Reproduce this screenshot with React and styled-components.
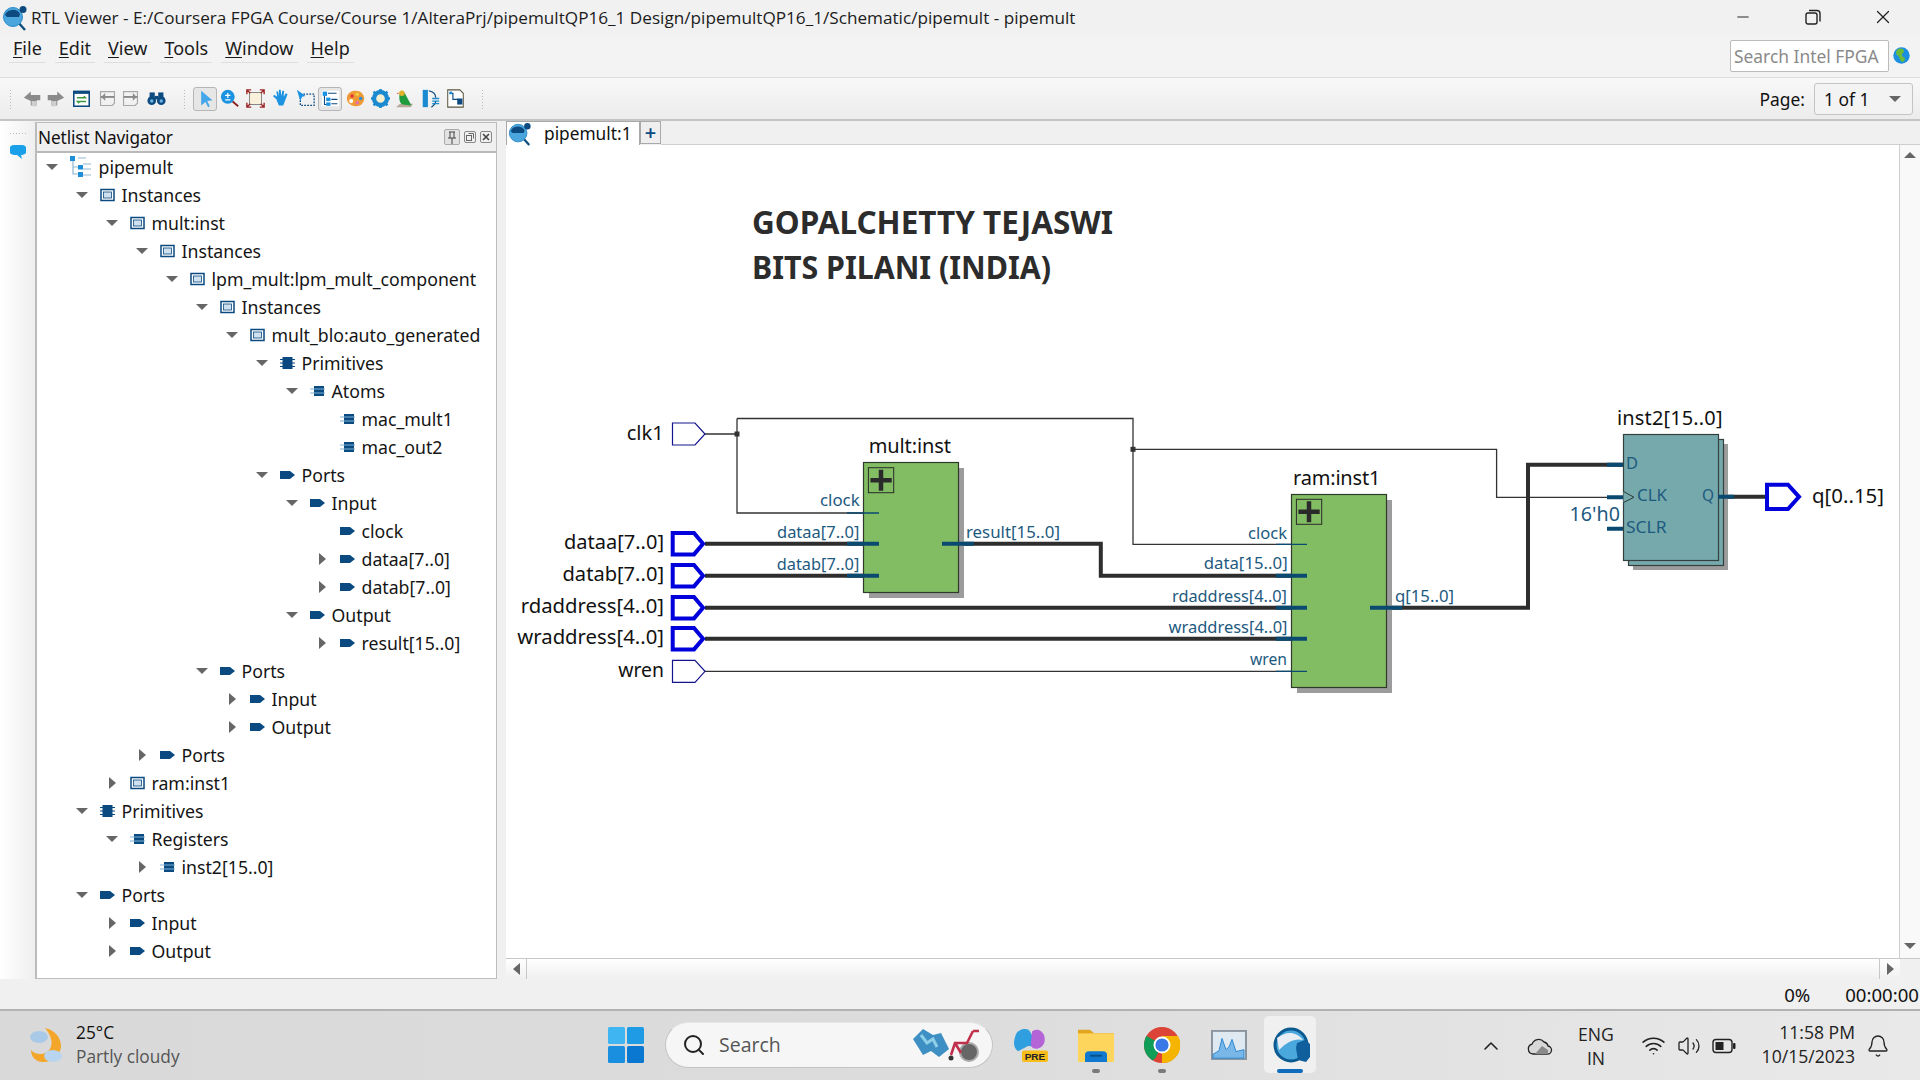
import React from "react";
import styled, { createGlobalStyle } from "styled-components";
import { Search, Wifi, ChevronUp, Bell, Volume2, Minus, X } from "lucide-react";

const Global = createGlobalStyle`
  html, body { margin: 0; padding: 0; background: #f0f0f0; }
  * { box-sizing: border-box; }
`;

const UI = `"Noto Sans", "Open Sans", sans-serif`;
const Page = styled.div`
  width: 1920px; height: 1080px; overflow: hidden; display: flex; flex-direction: column;
  font-family: ${UI}; color: #111; background: #f0f0f0;
`;
const TitleBar = styled.div`
  height: 36px; display: flex; align-items: center; padding-left: 2px; background: #f1f1f1; position: relative;
`;
const TitleText = styled.span`
  margin-left: 3px; margin-bottom: 2px; font-size: 17.16px; color: #1c1c1c; white-space: nowrap; font-family: "Open Sans", sans-serif;
`;
const WinControls = styled.div`
  margin-left: auto; display: flex; align-items: center; height: 32px; margin-top: -2px;
`;
const WinButton = styled.div`
  width: 70px; display: flex; justify-content: center; color: #222; margin-right: ${p => p.$mr || 0}px;
`;
const MenuBar = styled.div`
  height: 42px; display: flex; align-items: flex-start; padding: 0 31px 0 9px; gap: 9px; background: #f3f3f3;
  border-bottom: 1px solid #dcdcdc; position: relative;
`;
const MenuItem = styled.div`
  font-size: 18px; height: 27px; line-height: 24px; padding: 0 4px; border-bottom: 1px solid #dedede; color: #1a1a1a;
  & > u { text-underline-offset: 2px; }
`;
const SearchBox = styled.div`
  margin-left: auto; margin-top: 4px; width: 159px; height: 32px; background: #fff; border: 1px solid #bbb; border-radius: 2px;
  font-size: 17.4px; color: #8a8a8a; line-height: 31px; padding-left: 3px; white-space: nowrap; overflow: hidden;
`;
const Globe = styled.svg`
  position: absolute; right: 10px; top: 11px;
`;
const ToolBar = styled.div`
  height: 43px; display: flex; align-items: center; background: linear-gradient(#f8f8f8, #ececec);
  border-bottom: 2px solid #c4c4c4; padding-left: 9px; padding-right: 7px;
`;
const Handle = styled.div`
  width: 3px; height: 20px; margin: 0 ${p => p.$mr || 0}px 0 ${p => p.$ml || 0}px;
  background-image: radial-gradient(#bbb 1px, transparent 1px); background-size: 3px 3px;
`;
const ToolSlot = styled.div`
  width: ${p => p.$w}px; height: 24px; display: flex; align-items: center; justify-content: center; flex: none;
`;
const ActiveSlot = styled(ToolSlot)`
  background: #e6e6e6; border: 1px solid #b6b6b6; border-radius: 3px;
`;
const PageLabel = styled.span`
  margin-left: auto; font-size: 17.4px; margin-right: 9px;
`;
const PageSelect = styled.div`
  width: 99px; height: 32px; background: #f3f3f3; border: 1px solid #c4c4c4; border-radius: 3px; display: flex;
  align-items: center; justify-content: space-between; padding: 0 11px 0 9px; font-size: 17.4px;
`;
const Caret = styled.span`
  width: 0; height: 0; display: inline-block; flex: none;
  border-left: ${p => (p.$dir === "right" ? 7 : p.$dir === "left" ? 0 : 6)}px solid ${p => (p.$dir === "right" ? "#666" : "transparent")};
  border-right: ${p => (p.$dir === "left" ? 7 : p.$dir === "right" ? 0 : 6)}px solid ${p => (p.$dir === "left" ? "#666" : "transparent")};
  border-top: ${p => (p.$dir === "down" ? "6px solid #666" : p.$dir === "up" ? "0 solid transparent" : "6px solid transparent")};
  border-bottom: ${p => (p.$dir === "up" ? "6px solid #666" : p.$dir === "down" ? "0 solid transparent" : "6px solid transparent")};
`;
const Main = styled.div`
  flex: 1; min-height: 0; display: flex;
`;
const LeftDock = styled.div`
  width: 35px; flex: none; display: flex; flex-direction: column; align-items: center; padding-top: 11px; gap: 10px;
  background: linear-gradient(90deg, #fff, #efefef);
`;
const DockDots = styled.div`
  width: 17px; height: 3px; background-image: radial-gradient(#bbb 1px, transparent 1px); background-size: 3px 3px;
`;
const Panel = styled.div`
  width: 462px; flex: none; margin-top: 1px; display: flex; flex-direction: column; background: #fff;
  border: 1px solid #bcbcbc; border-left-width: 2px;
`;
const PanelHeader = styled.div`
  height: 30px; flex: none; display: flex; align-items: center; background: #f0f0f0; border-bottom: 2px solid #b9b9b9;
  padding: 0 4px 0 1px; font-size: 17.2px;
`;
const PanelTitle = styled.span`
  margin-right: auto; letter-spacing: -0.1px;
`;
const PanelBtn = styled.div`
  width: ${p => (p.$active ? 16 : 12)}px; height: ${p => (p.$active ? 16 : 12)}px; margin-left: ${p => p.$ml || 4}px;
  display: flex; align-items: center; justify-content: center; border-radius: 2px;
  ${p => (p.$active ? "background:#e2e2e2; border:1px solid #aaa;" : "border:1px solid #888;")}
  color: #555;
`;
const Tree = styled.div`
  flex: 1; padding-top: 0;
`;
const Row = styled.div`
  height: 28px; display: flex; align-items: center; padding-left: ${p => 9 + p.$level * 30}px; font-size: 17.7px; color: #151515; white-space: nowrap;
`;
const ArrowBox = styled.div`
  width: 12px; flex: none; display: flex; justify-content: center; margin-right: 11.5px;
`;
const RowIcon = styled.svg`
  flex: none; margin-right: ${p => p.$mr || 7}px;
`;
const Workspace = styled.div`
  flex: 1; min-width: 0; margin-left: 9px; display: flex; flex-direction: column;
`;
const TabStrip = styled.div`
  height: 24px; flex: none; display: flex; align-items: stretch; position: relative;
`;
const Tab = styled.div`
  width: 134px; background: #fff; border: 1px solid #a9a9a9; border-bottom: none; display: flex; align-items: center; padding-left: 1px;
  font-size: 17.3px; z-index: 1; height: 24px;
`;
const TabLabel = styled.span`
  margin-left: 12px;
`;
const AddTab = styled.div`
  width: 21px; height: 23px; background: #efefef; border: 1px solid #a9a9a9; color: #0a4a80; display: flex; align-items: center; justify-content: center; font-size: 20px; font-weight: 600;
`;
const TabFill = styled.div`
  flex: 1; border-bottom: 1px solid #cfcfcf;
`;
const CanvasRow = styled.div`
  flex: 1; min-height: 0; display: flex; background: #fff;
`;
const Schematic = styled.svg`
  flex: none; display: block; background: #fff;
`;
const VScroll = styled.div`
  flex: 1; border-left: 1px solid #cfcfcf; display: flex; flex-direction: column; align-items: center; justify-content: space-between;
  padding: 7px 0 9px; background: #f9f9f9;
`;
const HScroll = styled.div`
  height: 21px; flex: none; display: flex; align-items: center; border-top: 1px solid #c8c8c8;
  background: linear-gradient(#fff, #f0f0f0);
`;
const HButton = styled.div`
  width: 21px; height: 100%; display: flex; align-items: center; justify-content: center;
  border-${p => p.$side}: 1px solid #c8c8c8;
`;
const HTrack = styled.div` flex: 1; `;
const HCorner = styled.div` width: 20px; height: 100%; background: #f0f0f0; `;
const StatusBar = styled.div`
  height: 30px; flex: none; display: flex; align-items: center; justify-content: flex-end; padding-right: 1px; font-size: 18.6px; background: #f0f0f0;
`;
const StatusCell = styled.span`
  margin-left: ${p => p.$ml}px;
`;
const Taskbar = styled.div`
  height: 71px; flex: none; display: flex; align-items: center; border-top: 2px solid #b2b2b2; padding-bottom: 2px;
  background: linear-gradient(90deg, #d9d9d9, #dcdcdc 50%, #e9e9e9); font-family: "Open Sans", sans-serif; position: relative;
`;
const Weather = styled.div`
  display: flex; align-items: center; margin-left: 29px; width: 579px; flex: none;
`;
const WeatherText = styled.div`
  margin-left: 11px; margin-bottom: 1px; display: flex; flex-direction: column; gap: 1px; font-size: 17.3px; line-height: 23px;
`;
const Muted = styled.span` color: #555; `;
const SearchPill = styled.div`
  margin-left: 21px; margin-right: ${p => p.$mr}px; width: 328px; height: 46px; border-radius: 23px; background: #f6f6f6; border: 1px solid #c4c4c4; border-top-color: #e6e6e6;
  display: flex; align-items: center; padding-left: 16px; color: #444; font-size: 19.5px; flex: none; position: relative;
`;
const PillText = styled.span` margin-left: 13px; color: #555; margin-right: auto; `;
const PillArt = styled.svg` margin-right: 9px; `;
const AppSlot = styled.div`
  width: ${p => p.$w || 66}px; height: 57px; flex: none; display: flex; align-items: center; justify-content: center; position: relative; border-radius: 5px;
  ${p => (p.$active ? "background:#f0f0f0; margin-left: 3px; padding-left: 4px;" : "")}
`;
const AppDot = styled.div`
  position: absolute; bottom: 0; left: 50%; transform: translateX(-50%); height: 4px; border-radius: 2px;
  width: ${p => (p.$active ? 26 : 8)}px; background: ${p => (p.$active ? "#0f6cbd" : "#7a7a7a")};
`;
const Tray = styled.div`
  position: absolute; right: 0; top: 0; bottom: 0; display: flex; align-items: center; color: #222; font-size: 17.6px;
`;
const TrayStack = styled.div`
  display: flex; flex-direction: column; align-items: ${p => p.$align || "center"}; line-height: 24px; width: ${p => p.$w}px; margin-left: ${p => p.$ml || 0}px;
  margin-bottom: ${p => p.$mb || 0}px;
`;
const TrayIcon = styled.div`
  display: flex; margin-left: ${p => p.$ml || 0}px;
`;

const SchText = styled.text`
  font-family: ${UI}; font-size: ${p => p.$size || 20}px; fill: ${p => p.$color || "#111"}; font-weight: ${p => p.$weight || 400};
  dominant-baseline: central;
`;

const AppLogo = ({ s = 26 }) => (
  <svg width={s} height={s} viewBox="0 0 26 26">
    <line x1="15" y1="16" x2="23" y2="25" stroke="#0c4f7c" strokeWidth="2.4" />
    <circle cx="11" cy="12" r="9.5" fill="#4aa6dd" stroke="#2a8ac8" strokeWidth="1" />
    <path d="M3 10 a8 7 0 0 1 15 -1 l-1 3 h-12z" fill="#0c4a80" />
    <circle cx="21" cy="4.5" r="3.5" fill="#0c4a80" />
  </svg>
);
const Port = () => (
  <RowIcon width="15" height="14" viewBox="0 0 15 14"><path d="M0 3h10l5 4-5 4H0z" fill="#0a4a80" /></RowIcon>
);
const Inst = () => (
  <RowIcon width="15" height="14" viewBox="0 0 15 14"><rect x="1" y="1.5" width="13" height="11" fill="#fff" stroke="#0a4a80" strokeWidth="1.5" /><rect x="3.5" y="4" width="8" height="6" fill="#cfe0ee" stroke="#0a4a80" strokeWidth=".8" /></RowIcon>
);
const Prim = () => (
  <RowIcon width="15" height="14" viewBox="0 0 15 14"><rect x="2.5" y="1" width="10" height="12" fill="#0a4a80" /><path d="M0 3.5h15M0 7h15M0 10.5h15" stroke="#0a4a80" strokeWidth="1.2" /></RowIcon>
);
const Atom = () => (
  <RowIcon width="15" height="14" viewBox="0 0 15 14"><rect x="4" y="2" width="10" height="10" fill="#0a4a80" /><path d="M0 5h15M0 9h15" stroke="#7fb2d6" strokeWidth="1.2" /></RowIcon>
);
const TreeIco = () => (
  <RowIcon $mr={7} width="22" height="22" viewBox="0 0 22 22">
    <path d="M3 4v14h6M3 11h6M8 2h8M13 8h8M13 13h8M13 19h8" stroke="#8fb7d1" strokeWidth="1.2" fill="none" />
    <rect x="0" y="0" width="5" height="5" fill="#1e8fd6" /><rect x="8" y="9" width="5" height="4.5" fill="#1e8fd6" /><rect x="8" y="16" width="5" height="5" fill="#1e8fd6" />
  </RowIcon>
);
const ICONS = { inst: Inst, prim: Prim, atom: Atom, port: Port, tree: TreeIco };

const ROWS = [
  [0, "down", "tree", "pipemult"], [1, "down", "inst", "Instances"], [2, "down", "inst", "mult:inst"], [3, "down", "inst", "Instances"],
  [4, "down", "inst", "lpm_mult:lpm_mult_component"], [5, "down", "inst", "Instances"], [6, "down", "inst", "mult_blo:auto_generated"],
  [7, "down", "prim", "Primitives"], [8, "down", "atom", "Atoms"], [9, "", "atom", "mac_mult1"], [9, "", "atom", "mac_out2"],
  [7, "down", "port", "Ports"], [8, "down", "port", "Input"], [9, "", "port", "clock"], [9, "right", "port", "dataa[7..0]"], [9, "right", "port", "datab[7..0]"],
  [8, "down", "port", "Output"], [9, "right", "port", "result[15..0]"], [5, "down", "port", "Ports"], [6, "right", "port", "Input"], [6, "right", "port", "Output"],
  [3, "right", "port", "Ports"], [2, "right", "inst", "ram:inst1"], [1, "down", "prim", "Primitives"], [2, "down", "atom", "Registers"], [3, "right", "atom", "inst2[15..0]"],
  [1, "down", "port", "Ports"], [2, "right", "port", "Input"], [2, "right", "port", "Output"],
];

const Ico = ({ children, s = 19 }) => <svg width={s} height={s} viewBox="0 0 22 22">{children}</svg>;

const TOOLS = [
  [24, <Ico key="a"><path d="M1 10l8-7v4h11v6H16v6H9v-5z" fill="#8a8a8a" /><rect x="10" y="14" width="6" height="6" fill="#cfcfcf" /></Ico>],
  [22, <Ico key="b"><path d="M21 10l-8-7v4H2v6h4v6h7v-5z" fill="#8a8a8a" /><rect x="6" y="14" width="6" height="6" fill="#cfcfcf" /></Ico>],
  [30, <Ico key="c" s={17}><rect x="1" y="2" width="20" height="19" fill="#fff" stroke="#0c4a80" strokeWidth="2" /><rect x="0" y="1" width="22" height="4" fill="#0c4a80" /><path d="M5 10h11l-2-2M17 15H6l2 2" stroke="#3f9a3f" strokeWidth="2" fill="none" /></Ico>],
  [22, <Ico key="d" s={17}><path d="M2 2h18v15l-3 3H2z" fill="none" stroke="#a8a8a8" strokeWidth="1.5" /><path d="M2 9h18" stroke="#8a8a8a" strokeWidth="2.4" /><path d="M8 4l-5 5 5 5z" fill="#8a8a8a" /></Ico>],
  [24, <Ico key="e" s={17}><path d="M2 2h18v15l-3 3H2z" fill="none" stroke="#a8a8a8" strokeWidth="1.5" /><path d="M2 9h18" stroke="#8a8a8a" strokeWidth="2.4" /><path d="M14 4l5 5-5 5z" fill="#8a8a8a" /></Ico>],
  [28, <Ico key="f"><circle cx="5.5" cy="13.5" r="5" fill="#0c4a80" /><circle cx="16.5" cy="13.5" r="5" fill="#0c4a80" /><rect x="3" y="4" width="6" height="8" fill="#0c4a80" /><rect x="13" y="4" width="6" height="8" fill="#0c4a80" /><rect x="9" y="8" width="4" height="4" fill="#0c4a80" /><circle cx="5.5" cy="14" r="2" fill="#6db4e4" /><circle cx="16.5" cy="14" r="2" fill="#6db4e4" /></Ico>],
];
const TOOLS2 = [
  [24, <Ico key="a"><path d="M6 2l13 11-6 1 3 6-2 1-3-6-5 4z" fill="#45a6ea" /></Ico>, true],
  [24, <Ico key="b"><line x1="13" y1="13" x2="21" y2="20" stroke="#8c1c1c" strokeWidth="2" /><circle cx="9" cy="9" r="8" fill="#1b93e0" /><path d="M9 4.5v6M6 7.5h6M6 12.5h6" stroke="#fff" strokeWidth="1.4" /></Ico>],
  [29, <Ico key="c"><rect x="4" y="4" width="14" height="14" fill="#faf1dc" stroke="#777" /><path d="M1 6V1h5M16 1h5v5M21 16v5h-5M6 21H1v-5M1 1l4 4M21 1l-4 4M21 21l-4-4M1 21l4-4" stroke="#9b2323" strokeWidth="1.6" fill="none" /></Ico>],
  [22, <Ico key="d"><path d="M5 12L1 8l2-1 3 2-1-6h2l1 5V1h2l1 7 1-6h2l-.5 7 2.5-4 2 1-3 8-2 5H8z" fill="#1b93e0" /></Ico>],
  [26, <Ico key="e"><rect x="5" y="6" width="16" height="13" fill="none" stroke="#0c4a80" strokeWidth="1.5" strokeDasharray="2 1.5" /><path d="M1 1l10 7-4 1-2 5z" fill="#1b93e0" /></Ico>],
  [24, <Ico key="f"><rect x="1" y="2" width="20" height="18" fill="#fff" /><rect x="2" y="3" width="5" height="5" fill="#1b93e0" /><rect x="6" y="10" width="5" height="4" fill="#1b93e0" /><rect x="6" y="15.5" width="5" height="4" fill="#1b93e0" /><path d="M8 5h10M12 12h7M12 17h7M4 8v10h2" stroke="#0c4a80" strokeWidth="1.2" fill="none" /></Ico>, true],
  [26, <Ico key="g"><path d="M11 2c6 0 10 4 10 9s-4 9-9 9-11-3-11-9 5-9 10-9z" fill="#f19a35" /><circle cx="7" cy="8" r="2" fill="#d33" /><circle cx="13" cy="6" r="2" fill="#ecd23a" /><circle cx="17" cy="11" r="2" fill="#2a8ed8" /><circle cx="13" cy="16" r="2" fill="#e070b0" /><circle cx="6" cy="14" r="2.4" fill="#fff" /></Ico>],
  [24, <Ico key="h"><circle cx="11" cy="11" r="7.5" fill="#f6efd0" stroke="#1b8ad0" strokeWidth="5" /><path d="M11 0v3M11 19v3M0 11h3M19 11h3M3 3l2 2M17 17l2 2M3 19l2-2M17 5l2-2" stroke="#1b8ad0" strokeWidth="3" /></Ico>],
  [24, <Ico key="i"><path d="M1 21l5-4h15l-3 4z" fill="#b7a89a" /><path d="M5 8c0-5 6-6 7-2l7 13-10-1C5 16 5 12 5 8z" fill="#1f9b3e" /><circle cx="8" cy="5" r="3.2" fill="#e2b22a" /><path d="M4 4L2 5l2 1" fill="#d33" /></Ico>],
  [28, <Ico key="j"><path d="M2 1h6v20H2z" fill="#1b8ad0" /><path d="M9 2c5 1 8 4 8 8M12 21c3-2 5-4 5-7" stroke="#0c4a80" strokeWidth="1.4" fill="none" /><path d="M13 11h8M13 14h8M13 17h8" stroke="#1b8ad0" strokeWidth="1.6" /></Ico>],
  [22, <Ico key="k"><path d="M2 1h14l4 4v16H2z" fill="#fff" stroke="#5b5540" strokeWidth="1.2" /><path d="M4 5h4v7h6" stroke="#0c4a80" fill="none" strokeWidth="1.3" /><rect x="4" y="3" width="3" height="3" fill="#1b8ad0" /><rect x="13" y="11" width="6" height="7" fill="#0c4a80" /></Ico>],
];

const Pin = ({ cy, bus }) => (bus
  ? <path d={`M672.7 ${cy - 10.7}H694l9 10.7-9 10.7H672.7z`} fill="#fff" stroke="#0000dc" strokeWidth="4" />
  : <path d={`M672.5 ${cy - 11}H695l10 11-10 11H672.5z`} fill="#fff" stroke="#14148c" strokeWidth="1.2" />);
const PINS = [[434, false, "clk1", 626.7, 37], [543.7, true, "dataa[7..0]", 564, 100], [575.7, true, "datab[7..0]", 562.5, 101.5], [607.7, true, "rdaddress[4..0]", 520.7, 143.3], [638.7, true, "wraddress[4..0]", 517.3, 146.7], [671.3, false, "wren", 618.3, 45.7]];

const WIRE_THIN = "M705 434H737M737 418.5V513H879M737 418.5H1133V544.3H1307M1133 449.3H1496.6V497.3H1623M705 671.3H1307";
const WIRE_THICK = "M705 543.7H879M705 575.7H879M942 543.7H1100.8V575.7H1307M705 607.7H1307M705 638.7H1307M1370 607.7H1528V464.7H1623M1718 496.7H1765";
const STUB_THICK = "M847 543.7H879M847 575.7H879M942 543.7H973.7M1276 575.7H1307M1276 607.7H1307M1276 638.7H1307M1370 607.7H1402M1607 464.7H1623M1607 528.7H1623M1607 497.3H1623M1718 496.7H1734";
const STUB_THIN = "M847 513H879M1276 544.3H1307M1276 671.3H1307";
const TEAL = "#1d5a80";
const LABELS = [
  ["clock", 820, 500.3, 39.7], ["dataa[7..0]", 777, 531.7, 82.3], ["datab[7..0]", 776.7, 564, 82.6], ["result[15..0]", 966, 531.7, 94],
  ["clock", 1248, 532.7, 39], ["data[15..0]", 1203.7, 563, 84], ["rdaddress[4..0]", 1172, 595.7, 115], ["wraddress[4..0]", 1168.5, 627.3, 119], ["wren", 1250, 658.7, 37],
  ["q[15..0]", 1395, 595.7, 59], ["D", 1626, 463, 12], ["CLK", 1637, 495, 30], ["Q", 1702, 495, 12], ["SCLR", 1626, 527, 40.5],
];

const PlusBox = ({ x, y }) => (
  <g>
    <rect x={x} y={y} width="25.3" height="25" fill="none" stroke="#2a2a2a" strokeWidth="1" />
    <path d={`M${x + 2} ${y + 12.5}H${x + 23.3}M${x + 12.6} ${y + 2}V${y + 23}`} stroke="#2a2a2a" strokeWidth="4.5" />
  </g>
);

export default function App() {
  return (
    <Page>
      <Global />
      <TitleBar>
        <AppLogo />
        <TitleText>RTL Viewer - E:/Coursera FPGA Course/Course 1/AlteraPrj/pipemultQP16_1 Design/pipemultQP16_1/Schematic/pipemult - pipemult</TitleText>
        <WinControls>
          <WinButton><Minus size={18} strokeWidth={1.3} /></WinButton>
          <WinButton>
            <svg width="16" height="16" viewBox="0 0 16 16"><rect x="1" y="4" width="11" height="11" rx="2" fill="none" stroke="#222" strokeWidth="1.4" /><path d="M4 1.5h8a3 3 0 0 1 3 3v8" fill="none" stroke="#222" strokeWidth="1.4" /></svg>
          </WinButton>
          <WinButton $mr={2}><X size={22} strokeWidth={1.3} /></WinButton>
        </WinControls>
      </TitleBar>
      <MenuBar>
        {["File", "Edit", "View", "Tools", "Window", "Help"].map(m => (
          <MenuItem key={m}><u>{m[0]}</u>{m.slice(1)}</MenuItem>
        ))}
        <SearchBox>Search Intel FPGA</SearchBox>
        <Globe width="17" height="17" viewBox="0 0 17 17">
          <circle cx="8.5" cy="8.5" r="8.2" fill="#1b8fe0" />
          <path d="M5 2c3-1 6 0 6 2s-2 2-2 4 3 2 3 4-2 3-3 3-2-3-3-5-3-2-3-4 1-3 2-4z" fill="#6cba3c" />
        </Globe>
      </MenuBar>
      <ToolBar>
        <Handle $mr={8} />
        {TOOLS.map(([w, icon], i) => <ToolSlot key={i} $w={w}>{icon}</ToolSlot>)}
        <Handle $ml={13} $mr={7} />
        {TOOLS2.map(([w, icon, act], i) => act
          ? <ActiveSlot key={i} $w={w}>{icon}</ActiveSlot>
          : <ToolSlot key={i} $w={w}>{icon}</ToolSlot>)}
        <Handle $ml={15} />
        <PageLabel>Page:</PageLabel>
        <PageSelect>1 of 1<Caret $dir="down" /></PageSelect>
      </ToolBar>
      <Main>
        <LeftDock>
          <DockDots />
          <svg width="16" height="15" viewBox="0 0 16 15"><path d="M4 0h8a4 4 0 0 1 0 10h-1l1 4-5-4H4A4 4 0 0 1 4 0z" fill="#19a0e8" /></svg>
        </LeftDock>
        <Panel>
          <PanelHeader>
            <PanelTitle>Netlist Navigator</PanelTitle>
            <PanelBtn $active>
              <svg width="10" height="13" viewBox="0 0 10 13"><path d="M2 1h6M3 1v6M7 1v6M1 7h8M5 7v6" stroke="#444" fill="none" /></svg>
            </PanelBtn>
            <PanelBtn>
              <svg width="8" height="8" viewBox="0 0 8 8"><rect x="0.5" y="2.5" width="5" height="5" fill="none" stroke="#666" /><path d="M2.5 .5h5v5" fill="none" stroke="#666" /></svg>
            </PanelBtn>
            <PanelBtn>
              <svg width="8" height="8" viewBox="0 0 8 8"><path d="M1 1l6 6M7 1l-6 6" stroke="#444" strokeWidth="1.6" /></svg>
            </PanelBtn>
          </PanelHeader>
          <Tree>
            {ROWS.map(([lvl, arrow, icon, text], i) => {
              const I = ICONS[icon];
              return (
                <Row key={i} $level={lvl}>
                  <ArrowBox>{arrow && <Caret $dir={arrow} />}</ArrowBox>
                  <I />
                  {text}
                </Row>
              );
            })}
          </Tree>
        </Panel>
        <Workspace>
          <TabStrip>
            <Tab><AppLogo s={24} /><TabLabel>pipemult:1</TabLabel></Tab>
            <AddTab>+</AddTab>
            <TabFill />
          </TabStrip>
          <CanvasRow>
            <Schematic width="1393" height="813" viewBox="506 145 1393 813">
              <SchText x="752" y="221" $size={32} $weight={700} $color="#2c2c2c" textLength="361" lengthAdjust="spacingAndGlyphs">GOPALCHETTY TEJASWI</SchText>
              <SchText x="752" y="266" $size={32} $weight={700} $color="#2c2c2c" textLength="299" lengthAdjust="spacingAndGlyphs">BITS PILANI (INDIA)</SchText>

              <path d={WIRE_THIN} fill="none" stroke="#333" strokeWidth="1.3" />
              <path d={WIRE_THICK} fill="none" stroke="#2e2e2e" strokeWidth="4" />
              <rect x="734.5" y="431.5" width="5" height="5" fill="#333" />
              <rect x="1130.5" y="446.8" width="5" height="5" fill="#333" />

              {PINS.map(([cy, bus, t, x, len]) => (
                <g key={t}>
                  <Pin cy={cy} bus={bus} />
                  <SchText x={x} y={cy - 2} textLength={len} lengthAdjust="spacingAndGlyphs">{t}</SchText>
                </g>
              ))}

              <rect x="869" y="468" width="95" height="130" fill="#9c9c9c" />
              <rect x="863.5" y="462.5" width="95" height="130" fill="#83bd63" stroke="#2f3a2a" strokeWidth="1.2" />
              <PlusBox x={868.4} y={467.7} />
              <SchText x="868.7" y="445" textLength="82.3">mult:inst</SchText>

              <rect x="1297" y="500" width="95" height="193" fill="#9c9c9c" />
              <rect x="1291.5" y="494.5" width="95" height="193" fill="#83bd63" stroke="#2f3a2a" strokeWidth="1.2" />
              <PlusBox x={1296.4} y={499.3} />
              <SchText x="1293" y="477" textLength="87.4">ram:inst1</SchText>

              <rect x="1633" y="444" width="95" height="126" fill="#9c9c9c" />
              <rect x="1628.5" y="439.5" width="95" height="126" fill="#76a9ab" stroke="#33403f" strokeWidth="1.2" />
              <rect x="1623.5" y="434.5" width="95" height="126" fill="#76a9ab" stroke="#33403f" strokeWidth="1.2" />
              <SchText x="1617" y="417" textLength="105.5">inst2[15..0]</SchText>

              <path d={STUB_THIN} fill="none" stroke="#0a4a70" strokeWidth="1.3" />
              <path d={STUB_THICK} fill="none" stroke="#0a4a70" strokeWidth="4" />
              <path d="M1623.5 491.5L1634 497.3 1623.5 502.5" fill="#76a9ab" stroke="#2a3a3a" strokeWidth="1" />

              {LABELS.map(([t, x, y, len], i) => (
                <SchText key={i} x={x} y={y} $size={16} $color={TEAL} textLength={len} lengthAdjust="spacingAndGlyphs">{t}</SchText>
              ))}
              <SchText x="1569.6" y="513" $size={19.5} $color={TEAL} textLength="50.4" lengthAdjust="spacingAndGlyphs">16'h0</SchText>
              <path d="M1767 484.7H1788L1799 496.8 1788 509H1767z" fill="#fff" stroke="#0000dc" strokeWidth="4" />
              <SchText x="1812" y="495" textLength="72" lengthAdjust="spacingAndGlyphs">q[0..15]</SchText>
            </Schematic>
            <VScroll><Caret $dir="up" /><Caret $dir="down" /></VScroll>
          </CanvasRow>
          <HScroll>
            <HButton $side="right"><Caret $dir="left" /></HButton>
            <HTrack />
            <HButton $side="left"><Caret $dir="right" /></HButton>
            <HCorner />
          </HScroll>
        </Workspace>
      </Main>
      <StatusBar>
        <StatusCell $ml={0}>0%</StatusCell>
        <StatusCell $ml={35}>00:00:00</StatusCell>
      </StatusBar>
      <Taskbar>
        <Weather>
          <svg width="36" height="38" viewBox="0 0 36 38">
            <path d="M16 2c10 2 16 10 16 18S24 36 14 36C6 36 2 30 2 24c4 5 14 6 19-1 4-7 0-15-5-21z" fill="#f4a62a" />
            <ellipse cx="10" cy="11" rx="9" ry="6" fill="#a9c9e8" />
            <ellipse cx="24" cy="30" rx="9" ry="6" fill="#b9d4ee" />
          </svg>
          <WeatherText>
            <span>25°C</span>
            <Muted>Partly cloudy</Muted>
          </WeatherText>
        </Weather>
        <svg width="36" height="36" viewBox="0 0 36 36">
          <rect x="0" y="0" width="17" height="17" rx="1.5" fill="#3fb6f2" /><rect x="19" y="0" width="17" height="17" rx="1.5" fill="#1f9be6" />
          <rect x="0" y="19" width="17" height="17" rx="1.5" fill="#1a8fe0" /><rect x="19" y="19" width="17" height="17" rx="1.5" fill="#0a78d0" />
        </svg>
        <SearchPill $mr={2.5}>
          <Search size={24} strokeWidth={2} color="#222" />
          <PillText>Search</PillText>
          <PillArt width="72" height="36" viewBox="0 0 72 36">
            <path d="M2 12L12 2l10 6 8-2 8 16-10 8-8-6-8 4z" fill="#3d8fc4" />
            <path d="M10 8l6 8 6-4 4 8" stroke="#8fd0e8" strokeWidth="3" fill="none" />
            <circle cx="58" cy="25" r="9" fill="#666" stroke="#aaa" strokeWidth="2" />
            <path d="M62 4h6M62 4l-6 12h-12l-4 12M44 16l6 10" stroke="#c0304a" strokeWidth="2.6" fill="none" />
            <circle cx="40" cy="31" r="2.5" fill="#333" />
          </PillArt>
        </SearchPill>
        <AppSlot $w={69}>
          <svg width="36" height="36" viewBox="0 0 36 40" preserveAspectRatio="none">
            <path d="M4 8c2-6 12-8 14-3l8 17-10-1-10 6C0 22 2 14 4 8z" fill="#2f9fe0" />
            <path d="M20 5c4-4 10-2 12 4 2 7 0 13-6 15-5 1-8-2-7-7z" fill="#b564d8" />
            <rect x="10" y="26" width="26" height="13" rx="2" fill="#f7bd1c" />
            <text x="23" y="36.5" fontFamily="Liberation Sans, sans-serif" fontSize="10" fontWeight="700" textAnchor="middle" fill="#222">PRE</text>
          </svg>
        </AppSlot>
        <AppSlot $w={62}>
          <svg width="36" height="34" viewBox="0 0 36 38" preserveAspectRatio="none"><path d="M0 2h12l4 4h20v32H0z" fill="#e1a520" /><rect x="0" y="6" width="36" height="32" fill="#fdd45c" /><path d="M7 38v-8a4 4 0 0 1 4-4h14a4 4 0 0 1 4 4v8z" fill="#0f78cf" /><rect x="12" y="30" width="12" height="2" fill="#0b4f8a" /></svg>
          <AppDot />
        </AppSlot>
        <AppSlot $w={70}>
          <svg width="36" height="36" viewBox="-18 -18 36 36">
            <circle r="18" fill="#db4437" />
            <path d="M0 0L-15.6-9A18 18 0 0 0 -9 15.6z" fill="#0f9d58" />
            <path d="M0 18A18 18 0 0 0 16-9L0-9z" fill="#f4b400" />
            <path d="M-15.6 9L-15.6-9 0 0-7 14z" fill="#0f9d58" />
            <circle r="8.5" fill="#fff" /><circle r="6.6" fill="#3b78e7" />
          </svg>
          <AppDot />
        </AppSlot>
        <AppSlot $w={64}>
          <svg width="36" height="30" viewBox="0 0 36 32" preserveAspectRatio="none"><rect x="1" y="1" width="34" height="30" fill="#dfe9f1" stroke="#8a95a0" strokeWidth="2" /><path d="M2 26L8 22l3-13 4 12 3-3 3-8 4 13 8-2v9H2z" fill="#79b7e8" stroke="#2a86d0" /></svg>
        </AppSlot>
        <AppSlot $active $w={52}>
          <svg width="38" height="38" viewBox="0 0 38 38">
            <circle cx="18" cy="19" r="16" fill="#4aa8dc" stroke="#0c5a90" strokeWidth="3" />
            <path d="M4 12c8-6 18-8 26 2-8-2-16 2-24 10z" fill="#e8eef3" />
            <path d="M24 17l8-3 5 4v13l-4 5-8-2-2-12z" fill="#0f5f9c" />
          </svg>
          <AppDot $active />
        </AppSlot>
        <Tray>
          <ChevronUp size={24} strokeWidth={1.6} />
          <TrayIcon $ml={24}>
            <svg width="26" height="18" viewBox="0 0 26 18"><path d="M6 17a5 5 0 0 1-1-9.8A7 7 0 0 1 17 5a5 5 0 0 1 4 4 4 4 0 0 1-1 8z" fill="#d8d8d8" stroke="#222" strokeWidth="1.3" /><path d="M8 17l7-8 6 4v4z" fill="#8a8a8a" /></svg>
          </TrayIcon>
          <TrayStack $w={60} $ml={13}><span>ENG</span><span>IN</span></TrayStack>
          <TrayIcon $ml={15}><Wifi size={25} strokeWidth={1.5} /></TrayIcon>
          <TrayIcon $ml={11}><Volume2 size={24} strokeWidth={1.3} /></TrayIcon>
          <TrayIcon $ml={11}>
            <svg width="24" height="16" viewBox="0 0 24 16"><rect x="1" y="1.5" width="19" height="13" rx="3" fill="none" stroke="#222" strokeWidth="1.4" /><rect x="3.5" y="4" width="8" height="8" fill="#222" /><rect x="21" y="5" width="2.5" height="6" rx="1" fill="#222" /></svg>
          </TrayIcon>
          <TrayStack $w={110} $ml={9} $mb={3} $align="flex-end"><span>11:58 PM</span><span>10/15/2023</span></TrayStack>
          <TrayIcon $ml={11}><Bell size={24} strokeWidth={1.3} /></TrayIcon>
          <TrayIcon $ml={30} />
        </Tray>
      </Taskbar>
    </Page>
  );
}
